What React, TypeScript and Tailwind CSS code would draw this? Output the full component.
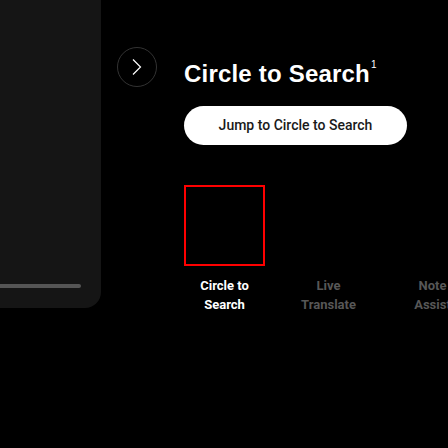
import React from 'react';

const TABS = [
    { label: ['Circle to', 'Search'], active: true },
    { label: ['Live', 'Translate'], active: false },
    { label: ['Note', 'Assist'], active: false },
];

export default function App() {
    return (
        <div className="w-[448px] h-[448px] bg-black overflow-hidden flex items-start">
            {/* Previous slide peek */}
            <div className="w-[101px] h-[308px] shrink-0 bg-[#151515] rounded-br-[16px] flex flex-col justify-end pb-[20px]">
                <div className="w-[81px] h-[4px] bg-[#555555] rounded-r-full" />
            </div>

            {/* Back arrow */}
            <button className="ml-[16px] mt-[47px] w-10 h-10 shrink-0 rounded-full border border-[#333333] flex items-center justify-center">
                <svg width="12" height="18" viewBox="0 0 12 18" fill="none">
                    <path d="M2 1.5 L9.5 9 L2 16.5" stroke="#ffffff" strokeWidth="1.2" />
                </svg>
            </button>

            {/* Feature */}
            <div className="ml-[27px] mt-[58px] flex flex-col shrink-0 w-[300px]">
                <h2 className="text-white text-[24px] leading-[32px] font-bold font-['Liberation_Sans',Arial,sans-serif] tracking-[0.2px]">
                    Circle to Search<sup className="text-[10px] font-normal ml-[1px] align-[9px]">1</sup>
                </h2>

                <button className="mt-[16px] w-[223px] h-[39px] rounded-full bg-white text-[#1a1a1a] text-[14px] font-medium font-['Roboto',sans-serif]">
                    Jump to Circle to Search
                </button>

                <div className="mt-[40px] w-[81px] h-[81px] border-2 border-[#ff0000]" />

                <div className="mt-[10px] flex gap-[23px]">
                    {TABS.map(t => (
                        <div
                            key={t.label[1]}
                            className={`w-[81px] shrink-0 text-center text-[13px] leading-[19px] font-bold font-['Roboto',sans-serif] ${t.active ? 'text-white' : 'text-[#575757]'}`}
                        >
                            <div>{t.label[0]}</div>
                            <div>{t.label[1]}</div>
                        </div>
                    ))}
                </div>
            </div>
        </div>
    );
}
